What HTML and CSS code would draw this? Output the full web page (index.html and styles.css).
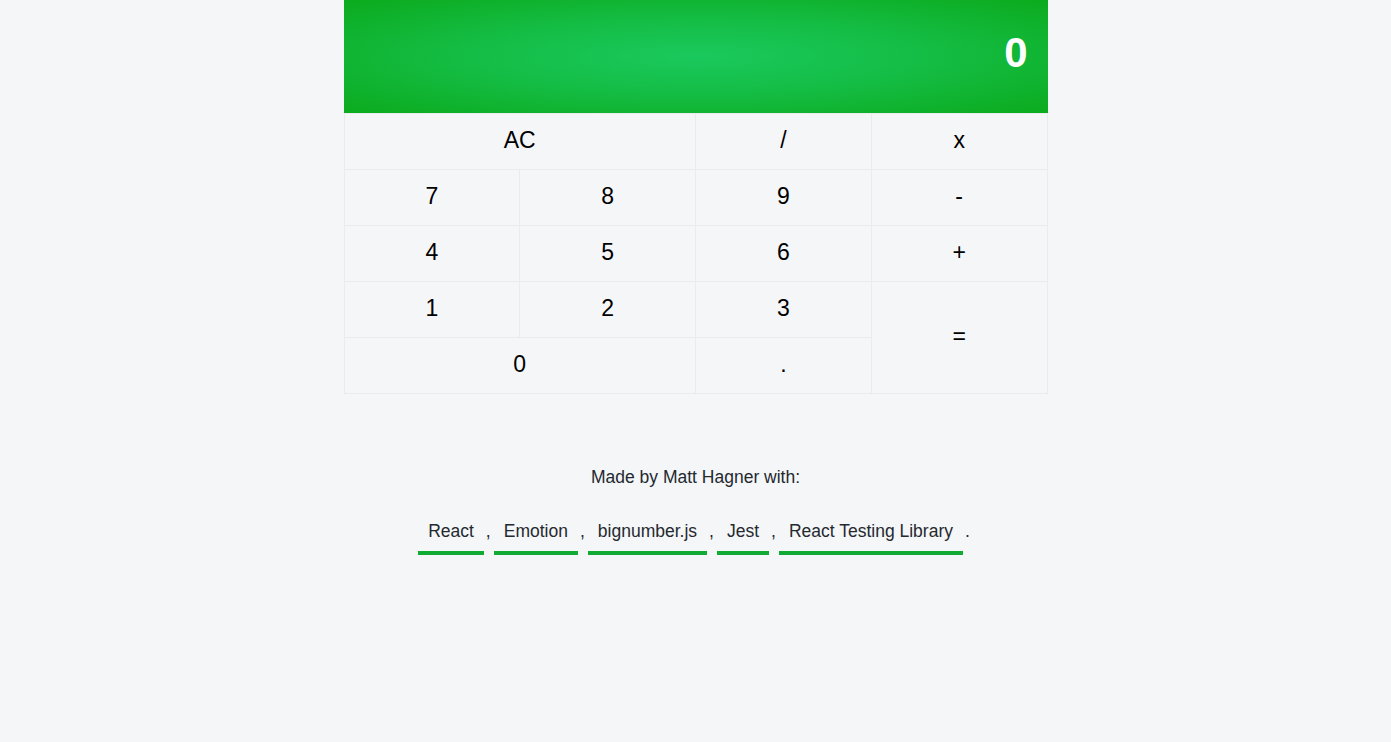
FILE: index.html
```html
<!DOCTYPE html>
<html>
<head>
<meta charset="utf-8">
<link rel="stylesheet" href="styles.css">
</head>
<body>
<main class="calc">
  <div class="display">0</div>
  <div class="keys">
    <button class="key span2">AC</button>
    <button class="key">/</button>
    <button class="key">x</button>
    <button class="key">7</button>
    <button class="key">8</button>
    <button class="key">9</button>
    <button class="key">-</button>
    <button class="key">4</button>
    <button class="key">5</button>
    <button class="key">6</button>
    <button class="key">+</button>
    <button class="key">1</button>
    <button class="key">2</button>
    <button class="key">3</button>
    <button class="key rspan2">=</button>
    <button class="key span2">0</button>
    <button class="key">.</button>
  </div>
</main>
<footer class="footer">
  <p class="made">Made by Matt Hagner with:</p>
  <p class="links"><a class="link">React</a><span class="sep">,</span><a class="link">Emotion</a><span class="sep">,</span><a class="link">bignumber.js</a><span class="sep">,</span><a class="link">Jest</a><span class="sep">,</span><a class="link">React Testing Library</a><span class="sep">.</span></p>
</footer>
</body>
</html>
```
FILE: styles.css
```css
html, body {
  margin: 0;
  padding: 0;
  background: #f5f6f8;
  font-family: "Liberation Sans", Arial, Helvetica, sans-serif;
}
.calc {
  width: 704px;
  margin: 0 auto;
}
.display {
  height: 113px;
  box-sizing: border-box;
  display: flex;
  align-items: center;
  justify-content: flex-end;
  padding: 0 20px 8px 0;
  color: #fff;
  font-weight: bold;
  font-size: 42px;
  background: radial-gradient(ellipse at center, #1ac95d 0%, #14bd45 45%, #0cab1d 100%);
}
.keys {
  display: grid;
  grid-template-columns: repeat(4, 1fr);
  grid-template-rows: repeat(5, 55px);
  gap: 1px;
  background: #e9ebee;
  border: 1px solid #e9ebee;
  border-top: 0;
  padding-top: 1px;
}
.key {
  background: #f5f6f8;
  border: 0;
  margin: 0;
  padding: 0 0 3px;
  font-family: "Liberation Sans", Arial, Helvetica, sans-serif;
  font-size: 23px;
  color: #000;
  display: flex;
  align-items: center;
  justify-content: center;
}
.span2 { grid-column: span 2; }
.rspan2 { grid-row: span 2; }
.footer {
  text-align: center;
  color: #24292f;
  font-size: 17.5px;
  padding-top: 73px;
}
.made {
  margin: 0;
  line-height: 20px;
}
.links {
  margin: 34px 0 0;
  display: flex;
  justify-content: center;
  align-items: flex-start;
  line-height: 20px;
}
.link {
  padding: 0 10px 10px;
  border-bottom: 4px solid #11ab33;
  color: #24292f;
}
.sep {
  padding: 0 3px 0 2px;
}
```
